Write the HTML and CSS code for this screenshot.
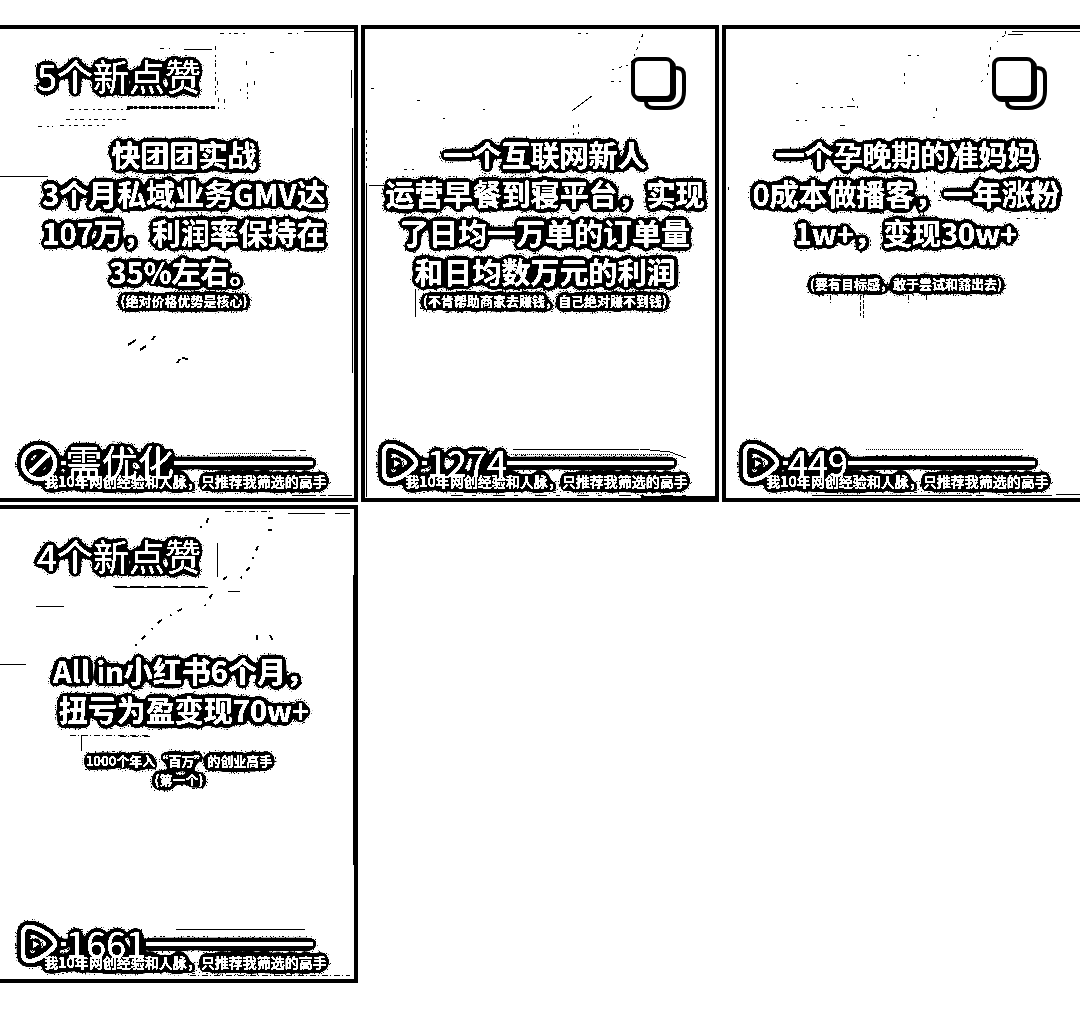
FILE: index.html
```html
<!DOCTYPE html>
<html lang="zh-CN">
<head>
<meta charset="utf-8">
<meta name="viewport" content="width=device-width, initial-scale=1">
<title>笔记</title>
<link rel="stylesheet" href="styles.css">
</head>
<body>
<svg class="defs" aria-hidden="true">
  <defs>
    <!-- Hard black outline round white shapes, with a sparse grain at its edge -->
    <filter id="outline" x="-20" y="-20" width="420" height="400" filterUnits="userSpaceOnUse" color-interpolation-filters="sRGB">
      <feComponentTransfer in="SourceGraphic" result="solid"><feFuncA type="linear" slope="60" intercept="-17"/></feComponentTransfer>
      <feGaussianBlur in="solid" stdDeviation="3" result="soft"/>
      <feComponentTransfer in="soft" result="near"><feFuncA type="linear" slope="80" intercept="-6"/></feComponentTransfer>
      <feComponentTransfer in="soft" result="far"><feFuncA type="linear" slope="200" intercept="-5"/></feComponentTransfer>
      <feTurbulence type="fractalNoise" baseFrequency="0.7" numOctaves="2" seed="4"/>
      <feColorMatrix values="0 0 0 0 0  0 0 0 0 0  0 0 0 0 0  60 0 0 0 -37" result="grain"/>
      <feComposite in="grain" in2="far" operator="in" result="fuzz"/>
      <feFlood flood-color="#000"/>
      <feComposite in2="near" operator="in" result="edge"/>
      <feMerge><feMergeNode in="fuzz"/><feMergeNode in="edge"/><feMergeNode in="solid"/></feMerge>
    </filter>
    <symbol id="play" viewBox="0 0 44 44">
      <path d="M6 13Q6 3 15 5Q26 8 35 16Q41 22 35 27Q26 36 15 39Q6 40 6 31Z" fill="none" stroke="#fff" stroke-width="4" stroke-linejoin="round"/>
      <path d="M16 19l6 3-6 4z" fill="#fff"/>
    </symbol>
    <symbol id="ban" viewBox="0 0 44 44">
      <circle cx="22" cy="22" r="16" fill="none" stroke="#fff" stroke-width="4"/>
      <path d="M13 31L32 13" stroke="#fff" stroke-width="4"/>
    </symbol>
    <symbol id="stack" viewBox="0 0 60 60">
      <path d="M49 14q7 0 7 8v15q0 17-17 17H26q-8 0-8-6" fill="#fff" stroke="#000" stroke-width="4" stroke-linecap="round"/>
      <rect x="7" y="7" width="39" height="39" rx="6" fill="#000" stroke="#000" stroke-width="4"/>
      <rect x="5" y="5" width="39" height="39" rx="6" fill="#fff" stroke="#000" stroke-width="4"/>
    </symbol>
  </defs>
</svg>

<main class="notes">
  <article class="card card-first">
    <svg class="marks" viewBox="0 0 358 477" aria-hidden="true">
      <path d="M304 6H354M351 45v28M352 103v16M352 118v230M184 24H212M0 151H48M128 82H214" />
      <path d="M127 82H215" stroke-width="3" stroke-dasharray="6 1 3 2"/>
      <path d="M215 21v16M215 38v34M217 56v10M218 73v14M224 74v10M246 36v4M254 56v5M247 58v16M240 64v2M270 27h6M160 23h10M220 8h26M288 8h10M70 84H130M66 94H130M60 100H105M38 101h15" stroke-dasharray="4 5 2 3"/>
      <path d="M152 315l3-4M140 325l6-4M128 320l8-5M182 333l6 1M177 338l3-4" stroke-width="2"/>
      <path d="M210 428H272M225 431H272" stroke-dasharray="1 1"/><path d="M272 425H306M292 470H352" stroke-dasharray="24 4 6 2"/>
    </svg>
    <header class="card-top"><span class="badge">5个新点赞</span></header>
    <h2 class="title">快团团实战<br>3个月私域业务GMV达<br>107万，利润率保持在<br>35%左右。</h2>
    <p class="note">(绝对价格优势是核心)</p>
    <footer class="card-foot">
      <div class="stat"><svg class="stat-icon" aria-hidden="true"><use href="#ban"/></svg><span class="value">需优化</span></div>
      <p class="caption">我10年网创经验和人脉，只推荐我筛选的高手</p>
    </footer>
  </article>

  <article class="card">
    <svg class="marks" viewBox="0 0 358 477" aria-hidden="true">
      <path d="M5 158v314M8 160h20M54 264v28M211 86l20-15M354 10v460" />
      <path d="M282 9l-12 30-20 6M250 56h12M212 100v12M217 99v10M10 63h3M56 75h3M82 93h2M122 84h2M43 144h10M5 105v40M217 8h14" stroke-dasharray="3 5 2 4"/>
      <path d="M152 424H278M279 424l30 3 16 6" stroke-dasharray="126 3 8 6 4 5"/><path d="M150 429H310" stroke-dasharray="1 1"/>
      <path d="M280 472H354" stroke-width="2"/><path d="M90 470H340" stroke-dasharray="12 9 4 17"/>
    </svg>
    <header class="card-top"><svg class="stack" role="img" aria-label="多图"><use href="#stack"/></svg></header>
    <h2 class="title">一个互联网新人<br>运营早餐到寝平台，实现<br>了日均一万单的订单量<br>和日均数万元的利润</h2>
    <p class="note">(不肯帮助商家去赚钱，自己绝对赚不到钱)</p>
    <footer class="card-foot">
      <div class="stat"><svg class="stat-icon" aria-hidden="true"><use href="#play"/></svg><span class="value">1274</span></div>
      <p class="caption">我10年网创经验和人脉，只推荐我筛选的高手</p>
    </footer>
  </article>

  <article class="card card-last">
    <svg class="marks" viewBox="0 0 358 477" aria-hidden="true">
      <path d="M290 6H358M286 9h15M125 81h8M118 100h5M334 469h24" />
      <path d="M283 6v3M283 10l-14 12-4 30-10 8M215 83l-5 16M74 58h2M74 95h14M186 30h12M182 48v14M100 82h24M130 73l6 10M6 162v8M204 152v30M212 156v12M295 193h30M90 175H310" stroke-dasharray="3 6 2 7"/>
      <path d="M138 270v22M141 268v25M186 270v8M108 270v8M204 270v7" stroke-dasharray="5 2 3 1"/>
      <path d="M144 424H302" stroke-dasharray="1 1"/><path d="M144 431H300M90 470H330" stroke-dasharray="160 4 8 20"/>
    </svg>
    <header class="card-top"><svg class="stack" role="img" aria-label="多图"><use href="#stack"/></svg></header>
    <h2 class="title">一个孕晚期的准妈妈<br>0成本做播客，一年涨粉<br>1w+，变现30w+</h2>
    <p class="note note-apart">(要有目标感，敢于尝试和豁出去)</p>
    <footer class="card-foot">
      <div class="stat"><svg class="stat-icon" aria-hidden="true"><use href="#play"/></svg><span class="value">449</span></div>
      <p class="caption">我10年网创经验和人脉，只推荐我筛选的高手</p>
    </footer>
  </article>

  <article class="card card-first">
    <svg class="marks" viewBox="0 0 358 477" aria-hidden="true">
      <path d="M288 8H325M335 8H350M115 82H208M0 159H26M81 230v16M217 38v34M36 101h28M176 424H305M228 86h12M353 70v290" />
      <path d="M113 81H205" stroke-dasharray="14 3"/>
      <path d="M208 13l-2 8-7 1M268 13h6M268 25h4M258 41l-9 22-10 12M223 75q4-4 8-4M212 89l-7 12M182 104l-22 12-30 30M257 130v10M270 130q4 5 0 10" stroke-width="2" stroke-dasharray="5 7 2 9"/>
      <path d="M70 230H150M120 231h32M225 6h45M190 470H350" stroke-dasharray="6 2 1 3"/>
    </svg>
    <header class="card-top"><span class="badge">4个新点赞</span></header>
    <h2 class="title title-low">All in小红书6个月，<br>扭亏为盈变现70w+</h2>
    <p class="note note-apart note-left">1000个年入“百万”的创业高手<br>(第一个)</p>
    <footer class="card-foot">
      <div class="stat"><svg class="stat-icon" aria-hidden="true"><use href="#play"/></svg><span class="value">1661</span></div>
      <p class="caption">我10年网创经验和人脉，只推荐我筛选的高手</p>
    </footer>
  </article>
</main>
</body>
</html>
```

FILE: styles.css
```css
* { box-sizing: border-box; }

body {
  margin: 0;
  background: #fff;
  color: #fff;
  font-family: "Noto Sans CJK SC", sans-serif;
}

.defs { display: block; width: 0; height: 0; }

.notes {
  display: grid;
  grid-template-columns: repeat(3, 1fr);
  gap: 3px;
  padding-top: 25px;
}

.card {
  position: relative;
  display: flex;
  flex-direction: column;
  aspect-ratio: 3 / 4;
  border: 4px solid #000;
}

.card-first { border-left: 0; padding-left: 4px; }
.card-last { border-right: 0; padding-right: 4px; }

.marks {
  position: absolute;
  top: -4px;
  left: -4px;
  width: calc(100% + 8px);
  fill: none;
  stroke: #000;
  stroke-width: 1;
  shape-rendering: crispEdges;
}
.card-first .marks { left: 0; width: calc(100% + 4px); }
.card-last .marks { width: calc(100% + 4px); }

.card-top {
  position: relative;
  display: flex;
  align-items: flex-start;
  height: 106px;
  padding: 25px 27px 0 33px;
}

.badge {
  font-size: 36px;
  line-height: 42px;
  filter: url(#outline);
}

.stack { width: 60px; height: 60px; margin-left: auto; }

.title, .note {
  margin: 0;
  padding-left: 10px;
  text-align: center;
  white-space: nowrap;
  filter: url(#outline);
}
.title { font-size: 29px; line-height: 39px; font-weight: 700; }
.title-low { margin-top: 36px; }

.note { font-size: 13px; line-height: 19px; font-weight: 700; }
.note-apart { margin-top: 22px; }
.note-left { padding-left: 0; }

.card-foot {
  position: relative;
  margin-top: auto;
  padding: 0 0 8px 13px;
  filter: url(#outline);
}

.stat {
  display: flex;
  align-items: center;
  height: 44px;
}
.stat-icon { width: 44px; height: 44px; }
.value {
  align-self: flex-start;
  font-size: 36px;
  line-height: 40px;
}

/* Thin rule on both sides of the number */
.stat::before,
.stat::after {
  content: "";
  height: 4px;
  background: #fff;
}
.stat::before { order: 1; width: 5px; }
.stat .value { order: 2; }
.stat::after { order: 3; flex: 1; margin-right: 41px; }

.caption {
  margin: -13px 0 0;
  font-size: 14px;
  line-height: 18px;
  font-weight: 700;
  text-align: center;
  white-space: nowrap;
}
```
